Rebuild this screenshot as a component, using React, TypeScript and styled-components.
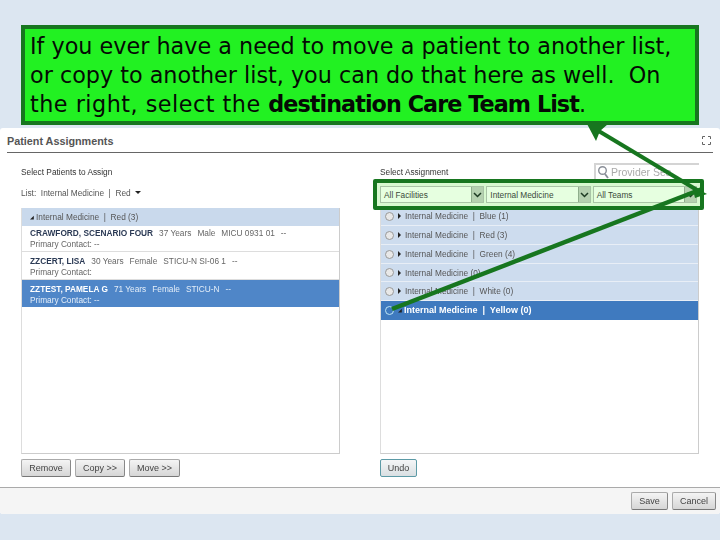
import styled, { createGlobalStyle } from "styled-components";

const patients = [
	{ name: "CRAWFORD, SCENARIO FOUR", info: ["37 Years", "Male", "MICU 0931 01", "--"], contact: "Primary Contact: --", height: 26, top: 2 },
	{ name: "ZZCERT, LISA", info: ["30 Years", "Female", "STICU-N SI-06 1", "--"], contact: "Primary Contact:", height: 28, top: 4 },
	{ name: "ZZTEST, PAMELA G", info: ["71 Years", "Female", "STICU-N", "--"], contact: "Primary Contact: --", height: 27, top: 4, selected: true },
];

const assignments = [
	{ label: "Internal Medicine  |  Blue (1)", height: 19 },
	{ label: "Internal Medicine  |  Red (3)", height: 19 },
	{ label: "Internal Medicine  |  Green (4)", height: 19 },
	{ label: "Internal Medicine (0)", height: 18 },
	{ label: "Internal Medicine  |  White (0)", height: 19 },
	{ label: "Internal Medicine  |  Yellow (0)", height: 19, selected: true },
];

const filters = ["All Facilities", "Internal Medicine", "All Teams"];

const App = () => {
	return (
		<>
			<GlobalStyle />
			<Page>
				<Callout>
					If you ever have a need to move a patient to another list,
					<br />
					or copy to another list, you can do that here as well.&nbsp; On
					<br />
					<LooseText>the right, select the </LooseText>
					<b>destination Care Team List</b>.
				</Callout>
				<Dialog>
					<DialogHeader>
						<Title>Patient Assignments</Title>
						<ExpandIcon width="9" height="9" viewBox="0 0 9 9">
							<path d="M0.5 3V0.5H3M6 0.5H8.5V3M8.5 6V8.5H6M3 8.5H0.5V6" fill="none" stroke="#666" strokeWidth="1" />
						</ExpandIcon>
					</DialogHeader>
					<DialogBody>
						<Column>
							<LeftTop>
								<Caption>Select Patients to Assign</Caption>
								<ListPicker>
									List:&nbsp; Internal Medicine &nbsp;|&nbsp; Red <Caret />
								</ListPicker>
							</LeftTop>
							<ListBox>
								<GroupHeader>
									<OpenMark>◢</OpenMark>Internal Medicine &nbsp;|&nbsp; Red (3)
								</GroupHeader>
								{patients.map((p) => (
									<PatientRow key={p.name} $selected={p.selected} $height={p.height} $top={p.top}>
										<PatientLine>
											<b>{p.name}</b>
											{p.info.map((t) => (
												<span key={t}>{t}</span>
											))}
										</PatientLine>
										<div>{p.contact}</div>
									</PatientRow>
								))}
							</ListBox>
							<ButtonRow>
								<Button $width={50}>Remove</Button>
								<Button $width={50}>Copy &gt;&gt;</Button>
								<Button $width={51}>Move &gt;&gt;</Button>
							</ButtonRow>
						</Column>
						<Column>
							<RightTop>
								<Caption>Select Assignment</Caption>
								<SearchBox>
									<svg width="13" height="14" viewBox="0 0 13 14">
										<circle cx="5.5" cy="5.5" r="3.8" fill="none" stroke="#8a8f98" strokeWidth="1.4" />
										<path d="M8 9l3 4" stroke="#8a8f98" strokeWidth="1.8" />
									</svg>
									Provider Sea
								</SearchBox>
							</RightTop>
							<FilterRow>
								{filters.map((f) => (
									<Select key={f}>
										<span>{f}</span>
										<SelectButton>
											<svg width="9" height="6" viewBox="0 0 9 6">
												<path d="M1 1l3.5 3.5L8 1" fill="none" stroke="#1c3a22" strokeWidth="1.5" />
											</svg>
										</SelectButton>
									</Select>
								))}
							</FilterRow>
							<ListBox>
								{assignments.map((a) => (
									<AssignmentRow key={a.label} $selected={a.selected} $height={a.height}>
										<Radio $selected={a.selected} />
										{a.selected ? <OpenMark>◢</OpenMark> : <ClosedMark />}
										<span>{a.label}</span>
									</AssignmentRow>
								))}
							</ListBox>
							<ButtonRow>
								<UndoButton $width={37}>Undo</UndoButton>
							</ButtonRow>
						</Column>
					</DialogBody>
					<Footer>
						<Button $width={37}>Save</Button>
						<Button $width={44}>Cancel</Button>
					</Footer>
				</Dialog>
				<Arrows width="720" height="540" viewBox="0 0 720 540">
					<path d="M597 130L702 193" stroke="#17761f" strokeWidth="4" />
					<path d="M586 122L608 124L600 131L596 141Z" fill="#17761f" />
					<path d="M707 194L692 186L695 198Z" fill="#17761f" />
					<path d="M702 189L392 309" stroke="#17761f" strokeWidth="4.5" />
				</Arrows>
			</Page>
		</>
	);
};

const GlobalStyle = createGlobalStyle`
	html, body {
		margin: 0;
		padding: 0;
	}
	* {
		box-sizing: border-box;
	}
`;

const Page = styled.div`
	position: relative;
	width: 720px;
	height: 540px;
	overflow: hidden;
	background: #dce6f1;
	padding-top: 25px;
	font-family: "Liberation Sans", sans-serif;
`;

const Callout = styled.div`
	margin: 0 21px 3px;
	height: 100px;
	padding: 3px 0 0 5px;
	background: #22f122;
	border: 4px solid #17761f;
	color: #050a05;
	font-family: "DejaVu Sans", sans-serif;
	font-size: 22.3px;
	line-height: 29px;
	white-space: nowrap;
	b {
		font-weight: bold;
		letter-spacing: -0.95px;
	}
`;

const LooseText = styled.span`
	letter-spacing: 0.5px;
`;

const Dialog = styled.div`
	display: flex;
	flex-direction: column;
	height: 386px;
	background: #fff;
	border-radius: 3px;
	filter: blur(0.3px);
	color: #444;
	font-size: 8.3px;
`;

const DialogHeader = styled.div`
	display: flex;
	align-items: center;
	justify-content: space-between;
	height: 25px;
	margin: 0 7px;
	padding-top: 2px;
	border-bottom: 1px solid #666;
`;

const Title = styled.div`
	font-size: 10.8px;
	font-weight: bold;
	color: #555;
`;

const ExpandIcon = styled.svg`
	margin: 0 2px 2px 0;
`;

const DialogBody = styled.div`
	flex: 1;
	display: flex;
	gap: 40px;
	padding: 0 21px;
`;

const Column = styled.div`
	display: flex;
	flex-direction: column;
	width: 319px;
	flex: none;
`;

const LeftTop = styled.div`
	height: 55px;
	padding-top: 13px;
`;

const Caption = styled.div`
	color: #333;
	line-height: 13px;
`;

const ListPicker = styled.div`
	margin-top: 8px;
	line-height: 13px;
	color: #555;
`;

const Caret = styled.i`
	display: inline-block;
	margin-left: 2px;
	vertical-align: 2px;
	border: 3px solid transparent;
	border-top: 3px solid #222;
	border-bottom: 0;
`;

const RightTop = styled.div`
	display: flex;
	align-items: flex-start;
	justify-content: space-between;
	height: 26px;
	padding-top: 10px;
	${Caption} {
		margin-top: 3px;
	}
`;

const SearchBox = styled.div`
	display: flex;
	align-items: center;
	gap: 1px;
	width: 105px;
	height: 18px;
	padding-left: 1px;
	border: 2px solid #d4d4d4;
	border-right: 0;
	color: #aaa;
	font-size: 10.5px;
	white-space: nowrap;
	overflow: hidden;
`;

const FilterRow = styled.div`
	position: relative;
	z-index: 1;
	display: flex;
	gap: 2px;
	height: 31px;
	margin: 0 -5px -3px -7px;
	padding: 3px;
	border: 4px solid #17761f;
	border-radius: 2px;
	background: #d8f9d0;
`;

const Select = styled.div`
	display: flex;
	align-items: center;
	justify-content: space-between;
	width: 105px;
	height: 100%;
	padding-left: 3px;
	border: 1px solid #a9c4a6;
	background: #e6ffe0;
	color: #3a4a3a;
`;

const SelectButton = styled.div`
	display: flex;
	align-items: center;
	justify-content: center;
	width: 12px;
	height: 100%;
	background: #b5d1b0;
	border-left: 1px solid #8fae8c;
`;

const ListBox = styled.div`
	flex: 1;
	border: 1px solid #ccc;
	border-top: 0;
	border-left-color: #ddd;
`;

const GroupHeader = styled.div`
	display: flex;
	align-items: center;
	white-space: pre;
	height: 18px;
	padding-left: 8px;
	background: #c9d9ec;
	color: #555;
`;

const OpenMark = styled.span`
	font-size: 5px;
	font-weight: normal;
	color: #222;
	margin-right: 2px;
`;

const PatientRow = styled.div<{ $selected?: boolean; $height: number; $top: number }>`
	height: ${(p) => p.$height}px;
	padding: ${(p) => p.$top}px 8px 0;
	line-height: 11px;
	background: ${(p) => (p.$selected ? "#4f86c8" : "#fff")};
	color: ${(p) => (p.$selected ? "#e4eef9" : "#666")};
	border-bottom: 1px solid ${(p) => (p.$selected ? "#4f86c8" : "#ddd")};
	b {
		color: ${(p) => (p.$selected ? "#fff" : "#2b3a55")};
	}
`;

const PatientLine = styled.div`
	display: flex;
	gap: 6px;
	white-space: nowrap;
`;

const AssignmentRow = styled.div<{ $selected?: boolean; $height: number }>`
	display: flex;
	align-items: center;
	white-space: pre;
	height: ${(p) => p.$height}px;
	padding-left: 4px;
	background: ${(p) => (p.$selected ? "#3f7abf" : "#cddcee")};
	border-bottom: 1px solid ${(p) => (p.$selected ? "#3f7abf" : "#e8eef6")};
	color: ${(p) => (p.$selected ? "#fff" : "#555")};
	font-weight: ${(p) => (p.$selected ? "bold" : "normal")};
	font-size: ${(p) => (p.$selected ? "9px" : "8.3px")};
`;

const Radio = styled.i<{ $selected?: boolean }>`
	width: 9px;
	height: 9px;
	margin-right: 4px;
	border-radius: 50%;
	border: 1px solid ${(p) => (p.$selected ? "#bfe6f5" : "#999")};
	background: ${(p) => (p.$selected ? "#3f7abf" : "#e8e8e8")};
`;

const ClosedMark = styled.i`
	margin-right: 4px;
	border: 3px solid transparent;
	border-left: 3px solid #222;
	border-right: 0;
`;

const ButtonRow = styled.div`
	display: flex;
	gap: 4px;
	height: 33px;
	padding-top: 5px;
`;

const Button = styled.button<{ $width: number }>`
	width: ${(p) => p.$width}px;
	height: 18px;
	padding: 0;
	border: 1px solid #aaa;
	border-right-color: #888;
	border-bottom-color: #777;
	border-radius: 2px;
	background: linear-gradient(#f4f4f4, #d6d6d6);
	color: #444;
	font-family: "Liberation Sans", sans-serif;
	font-size: 9px;
`;

const UndoButton = styled(Button)`
	border-color: #5c9aa6;
	background: linear-gradient(#f4f6f7, #d9dfe2);
`;

const Footer = styled.div`
	display: flex;
	justify-content: flex-end;
	gap: 4px;
	height: 27px;
	padding: 4px 4px 0 0;
	background: #f5f5f5;
	border-top: 1px solid #aaa;
	border-radius: 0 0 3px 3px;
`;

const Arrows = styled.svg`
	position: absolute;
	top: 0;
	left: 0;
	pointer-events: none;
`;

export default App;
